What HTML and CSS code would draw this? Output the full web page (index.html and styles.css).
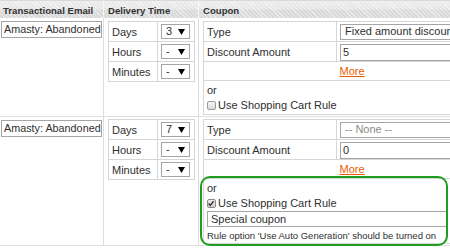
FILE: index.html
```html
<!DOCTYPE html>
<html>
<head>
<meta charset="utf-8">
<link rel="stylesheet" href="styles.css">
</head>
<body>
<div class="grid">
  <div class="th c1">Transactional Email</div>
  <div class="th c2">Delivery Time</div>
  <div class="th c3">Coupon</div>

  <!-- row 1 -->
  <div class="td c1"><div class="field email">Amasty: Abandoned Cart Reminder</div></div>
  <div class="td c2">
    <div class="delivery">
      <div class="lbl">Days</div><div class="val"><span class="sel small">3<svg class="arr" width="7" height="6" viewBox="0 0 7 6"><polygon points="0,0 7,0 3.5,6" fill="#000"/></svg></span></div>
      <div class="lbl">Hours</div><div class="val"><span class="sel small">-<svg class="arr" width="7" height="6" viewBox="0 0 7 6"><polygon points="0,0 7,0 3.5,6" fill="#000"/></svg></span></div>
      <div class="lbl">Minutes</div><div class="val"><span class="sel small">-<svg class="arr" width="7" height="6" viewBox="0 0 7 6"><polygon points="0,0 7,0 3.5,6" fill="#000"/></svg></span></div>
    </div>
  </div>
  <div class="td c3">
    <div class="coupon">
      <div class="lbl">Type</div><div class="val"><span class="sel wide">Fixed amount discount for whole cart</span></div>
      <div class="lbl">Discount Amount</div><div class="val"><span class="field wide">5</span></div>
      <div class="more"><a href="#">More</a></div>
      <div class="orbox">
        <div class="or">or</div>
        <div class="chk"><span class="cb"></span>Use Shopping Cart Rule</div>
      </div>
    </div>
  </div>

  <!-- row 2 -->
  <div class="td c1"><div class="field email">Amasty: Abandoned Cart Reminder</div></div>
  <div class="td c2 r2">
    <div class="delivery">
      <div class="lbl">Days</div><div class="val"><span class="sel small">7<svg class="arr" width="7" height="6" viewBox="0 0 7 6"><polygon points="0,0 7,0 3.5,6" fill="#000"/></svg></span></div>
      <div class="lbl">Hours</div><div class="val"><span class="sel small">-<svg class="arr" width="7" height="6" viewBox="0 0 7 6"><polygon points="0,0 7,0 3.5,6" fill="#000"/></svg></span></div>
      <div class="lbl">Minutes</div><div class="val"><span class="sel small">-<svg class="arr" width="7" height="6" viewBox="0 0 7 6"><polygon points="0,0 7,0 3.5,6" fill="#000"/></svg></span></div>
    </div>
  </div>
  <div class="td c3 r2 last">
    <div class="coupon">
      <div class="lbl">Type</div><div class="val"><span class="sel wide none">-- None --</span></div>
      <div class="lbl">Discount Amount</div><div class="val"><span class="field wide">0</span></div>
      <div class="more"><a href="#">More</a></div>
      <div class="orbox">
        <div class="or">or</div>
        <div class="chk"><span class="cb checked"><svg width="9" height="9" viewBox="0 0 9 9"><path d="M1.8 4.6 L3.7 6.6 L7.4 1.8" fill="none" stroke="#333" stroke-width="1.6"/></svg></span>Use Shopping Cart Rule</div>
        <div class="field rule">Special coupon</div>
        <div class="note">Rule option 'Use Auto Generation' should be turned on</div>
      </div>
    </div>
    <div class="highlight"></div>
  </div>
</div>
</body>
</html>
```

FILE: styles.css
```css
* { box-sizing: border-box; }
html, body { margin: 0; padding: 0; }
body {
  width: 450px;
  height: 249px;
  overflow: hidden;
  background: #fff;
  font-family: "Liberation Sans", Arial, sans-serif;
  font-size: 11px;
  color: #2f2f2f;
}
.grid {
  display: grid;
  grid-template-columns: 104px 95px 310px;
  width: 509px;
}
.th {
  height: 18px;
  padding: 2px 4px 0 4px;
  line-height: 16px;
  font-size: 9.6px;
  font-weight: bold;
  color: #333;
  white-space: nowrap;
  overflow: hidden;
  border-right: 1px solid #f7f7f7;
  border-top: 1px solid #d9d9d9;
  background:
    repeating-linear-gradient(45deg, rgba(255,255,255,0.45) 0 1px, rgba(255,255,255,0) 1px 3px),
    linear-gradient(to bottom, #ececec 0%, #e6e6e6 45%, #dadada 55%, #d9d9d9 100%);
}
.th.c1 { padding-left: 3px; }

.td {
  border-right: 1px solid #dadfe0;
  border-bottom: 1px solid #dadfe0;
  padding: 3px 0 1px 4px;
  min-width: 0;
}
.td.c1 { padding-left: 1px; }
.td.r2 { padding-top: 2px; }
.td.last { position: relative; }

.field {
  display: block;
  height: 17px;
  border: 1px solid #a5a5a5;
  background: #fff;
  line-height: 15px;
  padding: 0 3px;
  white-space: nowrap;
  overflow: hidden;
  color: #2f2f2f;
}
.field.email { width: 101px; padding-left: 2px; font-size: 10.8px; }

.sel {
  display: flex;
  align-items: center;
  justify-content: space-between;
  height: 15px;
  border: 1px solid #a5a5a5;
  background: #fff;
  white-space: nowrap;
  overflow: hidden;
  line-height: 13px;
}
.sel.small { width: 29px; padding: 0 4px 0 4px; }
.sel.wide { width: 160px; padding: 0 4px; height: 16px; }
.sel.none { color: #8a8a8a; }
.arr { flex: none; }

/* delivery sub-table */
.delivery {
  display: grid;
  grid-template-columns: 49px 37px;
  width: 87px;
  border-left: 1px solid #d6d6d6;
  border-top: 1px solid #d6d6d6;
}
.delivery .lbl,
.delivery .val,
.coupon .lbl,
.coupon .val {
  height: 20px;
  border-right: 1px solid #d6d6d6;
  border-bottom: 1px solid #d6d6d6;
  display: flex;
  align-items: center;
}
.delivery .lbl { padding-left: 3px; }
.delivery .val { padding-left: 3px; }

/* coupon sub-table */
.coupon {
  display: grid;
  grid-template-columns: 133px 164px;
  width: 298px;
  border-left: 1px solid #d6d6d6;
  border-top: 1px solid #d6d6d6;
}
.coupon .lbl { padding-left: 3px; }
.coupon .val { padding-left: 3px; }
.coupon .field.wide { width: 160px; height: 17px; padding: 0 2px; margin-top: 1px; }

.more {
  grid-column: 1 / 3;
  height: 19px;
  border-right: 1px solid #d6d6d6;
  border-bottom: 1px solid #d6d6d6;
  text-align: center;
  line-height: 18px;
}
.more a { color: #eb5e00; text-decoration: underline; }

.orbox {
  grid-column: 1 / 3;
  border-right: 1px solid #d6d6d6;
  border-bottom: 1px solid #d6d6d6;
  padding: 2px 3px 1px 3px;
}
.or { line-height: 14px; }
.chk {
  display: flex;
  align-items: center;
  height: 16px;
  white-space: nowrap;
}
.cb {
  display: inline-flex;
  width: 9px;
  height: 9px;
  margin-right: 2px;
  border: 1px solid #9a9a9a;
  border-radius: 2px;
  background: linear-gradient(#f6f6f6, #dcdcdc);
  flex: none;
}
.cb.checked { border-color: #8a8a8a; background: linear-gradient(#e9e9e9, #cfcfcf); }
.cb svg { margin: -1px 0 0 -1px; }

.field.rule {
  width: 240px;
  height: 16px;
  line-height: 14px;
  padding: 0 3px;
  margin-top: 0;
}
.note {
  font-size: 9.5px;
  line-height: 13px;
  padding-top: 2px;
  white-space: nowrap;
}

.highlight {
  position: absolute;
  left: 1px;
  top: 59px;
  width: 248px;
  height: 70px;
  border: 2px solid #1f9d1f;
  border-radius: 10px;
  pointer-events: none;
}
```
